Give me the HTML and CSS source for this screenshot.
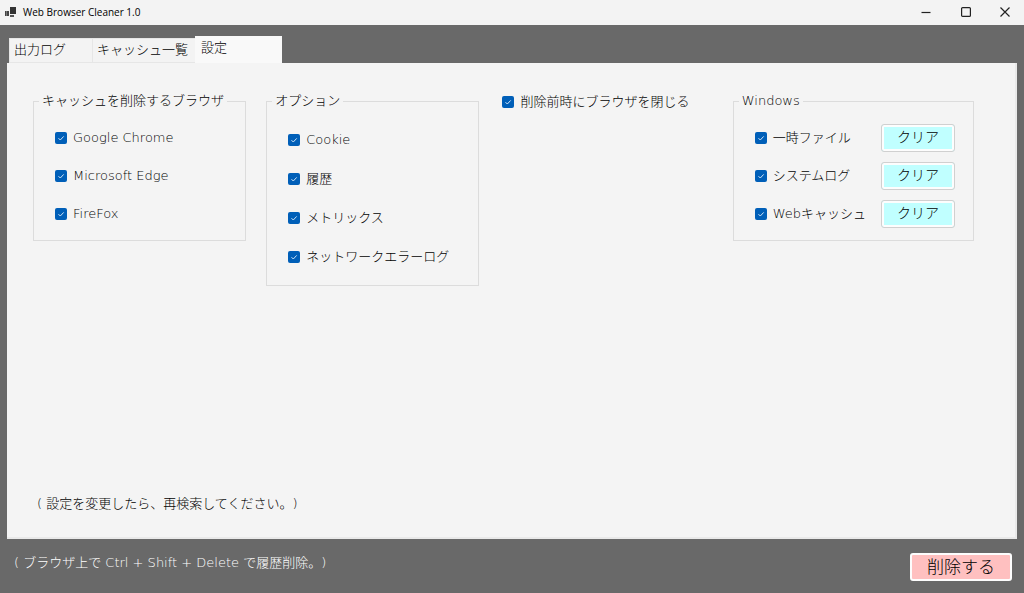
FILE: index.html
```html
<!DOCTYPE html>
<html lang="ja">
<head>
    <meta charset="UTF-8">
    <title>Web Browser Cleaner 1.0</title>
    <link rel="stylesheet" href="styles.css">
</head>
<body>
    <header class="titlebar">
        <svg class="app-icon" width="12" height="12" viewBox="0 0 12 12" aria-hidden="true">
            <path fill="#333" d="M5 0h6v7H5z"/>
            <path fill="#444" d="M0 4h4v5H0z"/>
            <path fill="#777" d="M1 4h1v5H1z"/>
            <path fill="#555" d="M5 8h4v2H5z"/>
        </svg>
        <h1 class="title">Web Browser Cleaner 1.0</h1>
        <div class="window-buttons">
            <button type="button" aria-label="最小化"><svg width="10" height="10" viewBox="0 0 10 10"><path d="M0.500 5.500h9"/></svg></button>
            <button type="button" aria-label="最大化"><svg width="10" height="10" viewBox="0 0 10 10"><rect x="0.600" y="0.600" width="8.800" height="8.800" rx="1"/></svg></button>
            <button type="button" aria-label="閉じる"><svg width="10" height="10" viewBox="0 0 10 10"><path d="M0.500 0.500l9 9M9.500 0.500l-9 9"/></svg></button>
        </div>
    </header>

    <main class="window">
        <div class="tabs" role="tablist">
            <button type="button" class="tab tab-log" role="tab">出力ログ</button>
            <button type="button" class="tab tab-cache" role="tab">キャッシュ一覧</button>
            <button type="button" class="tab tab-active" role="tab" aria-selected="true">設定</button>
        </div>

        <section class="panel" role="tabpanel">
            <div class="groups">
                <fieldset class="group">
                    <legend>キャッシュを削除するブラウザ</legend>
                    <label class="check"><input type="checkbox" checked>Google Chrome</label>
                    <label class="check"><input type="checkbox" checked>Microsoft Edge</label>
                    <label class="check"><input type="checkbox" checked>FireFox</label>
                </fieldset>

                <fieldset class="group group-options">
                    <legend>オプション</legend>
                    <label class="check"><input type="checkbox" checked>Cookie</label>
                    <label class="check"><input type="checkbox" checked>履歴</label>
                    <label class="check"><input type="checkbox" checked>メトリックス</label>
                    <label class="check"><input type="checkbox" checked>ネットワークエラーログ</label>
                </fieldset>

                <label class="check check-close"><input type="checkbox" checked>削除前時にブラウザを閉じる</label>

                <fieldset class="group">
                    <legend>Windows</legend>
                    <div class="row">
                        <label class="check"><input type="checkbox" checked>一時ファイル</label>
                        <button type="button" class="clear">クリア</button>
                    </div>
                    <div class="row">
                        <label class="check"><input type="checkbox" checked>システムログ</label>
                        <button type="button" class="clear">クリア</button>
                    </div>
                    <div class="row">
                        <label class="check"><input type="checkbox" checked>Webキャッシュ</label>
                        <button type="button" class="clear">クリア</button>
                    </div>
                </fieldset>
            </div>
            <p class="note">( 設定を変更したら、再検索してください。)</p>
        </section>
    </main>

    <footer class="footer">
        <p class="hint">( ブラウザ上で Ctrl + Shift + Delete で履歴削除。)</p>
        <button type="button" class="delete">削除する</button>
    </footer>
</body>
</html>
```
FILE: styles.css
```css
*{
    box-sizing: border-box;
    margin: 0;
    padding: 0;
}
body{
    display: flex;
    flex-direction: column;
    min-height: 100vh;
    background: #696969;
    color: #000;
    font-family: "DejaVu Sans", "Noto Sans CJK JP", sans-serif;
    font-size: 13px;
    font-weight: 300;
    line-height: 18px;
    text-spacing-trim: space-all;
}
button{
    font: inherit;
    color: inherit;
    white-space: nowrap;
}

/* title bar */
.titlebar{
    display: flex;
    align-items: center;
    height: 25px;
    padding-left: 5px;
    background: #f3f3f3;
}
.title{
    flex: 1;
    margin-left: 6px;
    padding-bottom: 2px;
    font-family: "Open Sans", sans-serif;
    font-size: 10px;
    font-weight: 400;
}
.window-buttons{
    display: flex;
}
.window-buttons button{
    display: flex;
    align-items: center;
    justify-content: center;
    width: 40px;
    height: 25px;
    padding-bottom: 2px;
    border: 0;
    background: none;
}
.window-buttons svg{
    fill: none;
    stroke: #222;
    stroke-width: 1.2;
}

/* tabs */
.window{
    display: flex;
    flex: 1;
    flex-direction: column;
    padding: 11px 7px 0;
}
.tabs{
    display: flex;
    align-items: flex-end;
    padding-left: 2px;
}
.tab{
    height: 25px;
    padding: 0 4px 1px;
    border: 1px solid #e6e6e6;
    border-width: 1px 0 1px 1px;
    background: #f3f3f3;
    text-align: left;
}
.tab-log{
    width: 83px;
}
.tab-cache{
    width: 103px;
}
.tab-active{
    width: 87px;
    height: 27px;
    padding: 0 6px 3px;
    border: 0;
    background: #f9f9f9;
}
.panel{
    display: flex;
    flex: 1;
    flex-direction: column;
    justify-content: space-between;
    padding: 29px 41px 24px 26px;
    border-right: 2px solid #e9e9e9;
    border-bottom: 2px solid #e9e9e9;
    background: #f4f4f4;
}

/* setting groups */
.groups{
    display: grid;
    grid-template-columns: 213fr 213fr 213fr 241fr;
    align-items: start;
    gap: 20px;
}
.group{
    display: flex;
    flex-direction: column;
    gap: 10px;
    min-width: 0;
    padding: 14px 18px 12px 21px;
    border: 1px solid #dcdcdc;
}
.group-options{
    gap: 11px;
    padding: 16px 18px 14px 21px;
}
.group legend{
    margin-left: -16px;
    padding: 0 3px;
    white-space: nowrap;
}
.row{
    display: flex;
    align-items: center;
    justify-content: space-between;
}
.check{
    display: flex;
    align-items: center;
    gap: 6px;
    height: 28px;
    white-space: nowrap;
}
.check input{
    flex: none;
    width: 12px;
    height: 12px;
    border-radius: 2px;
    appearance: none;
    background: #005fb8;
}
.check input:checked{
    background: #005fb8 url("data:image/svg+xml,%3Csvg xmlns='http://www.w3.org/2000/svg' viewBox='0 0 12 12'%3E%3Cpath d='M3.500 6.200l1.800 1.800 3.400-3.600' fill='none' stroke='%23cfe4f7'/%3E%3C/svg%3E") center / 12px no-repeat;
}
.check-close{
    height: 20px;
    margin-left: 3px;
}
.clear{
    width: 74px;
    height: 28px;
    padding-bottom: 3px;
    border: 1px solid #d0d0d0;
    border-radius: 3px;
    background: #c0ffff;
    box-shadow: inset 0 0 0 2px #fdfdfd;
    font-size: 14px;
}
.note{
    padding-left: 4px;
}

/* footer */
.footer{
    display: flex;
    align-items: center;
    justify-content: space-between;
    height: 54px;
    padding: 2px 12px 0 14px;
    color: #fff;
}
.window-buttons button:last-child{
    width: 38px;
}
.hint{
    padding-bottom: 8px;
}
.delete{
    width: 102px;
    height: 28px;
    border: 2px solid #fdfdfd;
    border-radius: 3px;
    background: #ffc0c0;
    color: #000;
    font-size: 17px;
}
```
